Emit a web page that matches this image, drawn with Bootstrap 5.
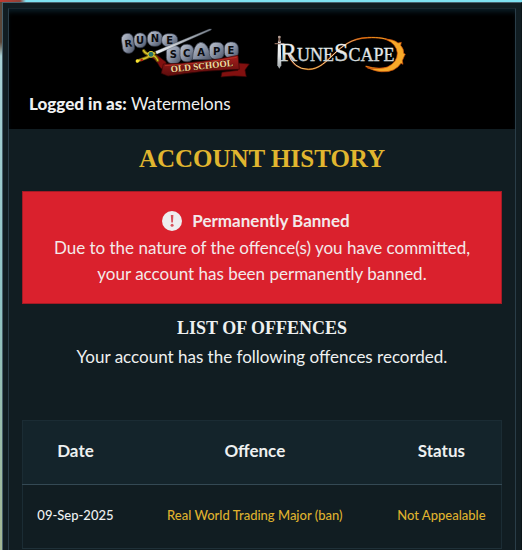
<!DOCTYPE html>
<html lang="en">
<head>
<meta charset="utf-8">
<meta name="viewport" content="width=device-width, initial-scale=1">
<title>Account History</title>
<link href="https://cdn.jsdelivr.net/npm/bootstrap@5.3.0/dist/css/bootstrap.min.css" rel="stylesheet">
<style>
body{font-family:Lato,"Noto Sans",sans-serif;font-size:17px;line-height:26px;color:#eef0f0;
background:linear-gradient(90deg,#c23a30 0,#8f4238 20px,#7fe3f3 26px) top/100% 2px no-repeat,linear-gradient(#5a4638 0,#5a4638 42px,#a8d2d6 56px,#8fc4c6 300px,#a3b794 550px)}
.page-wrap{padding:2px 0 0 2px}
.frame{background:#111d22;border:1px solid #49616d;border-right-color:#0b1519;border-bottom:0;padding:5px 5px 0}
.panel{border:1px solid #2a3d48;border-top-color:#18272e;border-bottom:0}
.brand-bar{background:#000;box-shadow:inset 0 5px 5px -2px #0a1c25;padding:11px 20px 12px}
.brand-bar strong{font-weight:900}
.logos{gap:5px;margin-bottom:6px}
.logos svg{display:block}
h1,h2{font-family:"Liberation Serif",serif;font-weight:700;text-transform:uppercase}
h1{font-size:25px;line-height:30px;color:#e1b62f;margin:15px 0 17px}
h2{font-size:18px;line-height:24px;margin:12px 0 4px}
.content-area{padding:0 13px}
.ban-notice{background:#da212d;border:1px solid #a31b25;border-radius:0;padding:14px 20px 16px;margin:0;color:#f3e9ea}
.notice-title{gap:10px;line-height:29px;padding-right:12px}
.offences{--bs-table-bg:transparent;margin:50px 0 0;color:#eef0f0;font-size:13px;border:1px solid #1b2c34;text-align:center;border-collapse:collapse}
.offences th{font-size:17px;background:#14242b;color:#eef0f0;height:64px;padding:0 0 3px;border-bottom:1px solid #344954}
.offences td{height:64px;padding:0 0 3px;color:#eef0f0;border-bottom:1px solid #1f3038;font-weight:500}
.offences td a{color:#dfb12e;text-decoration:none}
.c-date{width:22%}.c-status{width:25%}
</style>
</head>
<body class="min-vh-100">
<div class="page-wrap">
<div class="frame min-vh-100">
<main class="panel min-vh-100">
<header class="brand-bar">
<div class="logos d-flex justify-content-center align-items-center">
<svg width="150" height="65" viewBox="0 0 450 195" role="img" aria-label="Old School RuneScape">
<defs>
<linearGradient id="stone" x2="1" y2="1"><stop offset="0" stop-color="#c2c8d4"/><stop offset=".5" stop-color="#8a93a5"/><stop offset="1" stop-color="#485062"/></linearGradient>
<linearGradient id="ribbon" x2="0" y2="1"><stop offset="0" stop-color="#a81f1d"/><stop offset="1" stop-color="#5c0c0c"/></linearGradient>
<linearGradient id="blade" x2="1"><stop offset="0" stop-color="#eff2f5"/><stop offset="1" stop-color="#777f8a"/></linearGradient>
</defs>
<g fill="url(#stone)" stroke="#343b4a" stroke-width="2">
<rect x="36" y="40" width="36" height="60" rx="17" transform="rotate(-8 54 70)"/>
<rect x="72" y="39" width="37" height="44" rx="17"/>
<rect x="112" y="33" width="45" height="46" rx="20"/>
<rect x="155" y="41" width="48" height="39" rx="18"/>
<rect x="169" y="77" width="44" height="54" rx="18"/>
<rect x="210" y="73" width="41" height="52" rx="18"/>
<path d="M247 119q3-48 25-52 22 0 34 52z"/>
<rect x="298" y="67" width="44" height="51" rx="18"/>
<rect x="343" y="66" width="42" height="49" rx="18"/>
</g>
<path d="M136 94 298 27l7 0-3 4-162 72z" fill="url(#blade)" stroke="#414854"/>
<g font-family="DejaVu Sans" font-weight="700" fill="#0b0c10" text-anchor="middle" font-size="30">
<text x="55" y="81" transform="rotate(-8 55 70)">R</text><text x="90" y="73">U</text><text x="135" y="67">N</text><text x="179" y="72">E</text>
<text x="190" y="114">S</text><text x="230" y="110">C</text><text x="273" y="108">A</text><text x="320" y="105">P</text><text x="363" y="103">E</text>
</g>
<path d="M112 106q26 10 38 36l20 18-2-34-27-21zM384 129l34 3-13 18 4 20q-38-5-76 1l3-14 48-6z" fill="#82100f" stroke="#380606" stroke-width="2"/>
<path d="M160 132q112-2 224-26l4 42q-108 2-214 20l-20-8z" fill="url(#ribbon)" stroke="#3b0505" stroke-width="2"/>
<path d="M165 137q110-4 215-25" fill="none" stroke="#c53a2c" stroke-width="2"/>
<g fill="none" stroke-linecap="round"><path d="M82 123q27-7 51-23M101 92q5 10 19 11 18 4 23 18" stroke="#776309" stroke-width="10"/><path d="M82 123q27-7 51-23M101 92q5 10 19 11 18 4 23 18" stroke="#d8c52a" stroke-width="4"/></g>
<circle cx="123" cy="103" r="9" fill="#287468" stroke="#dbc52d" stroke-width="3"/>
<circle cx="82" cy="123" r="5" fill="#fae533"/><circle cx="95" cy="120" r="4" fill="#b51f18"/>
<text x="183" y="157" transform="rotate(-6 183 157)" font-family="Liberation Serif" font-weight="700" font-size="28" fill="#f4d9a0" stroke="#41200d" stroke-width="2" paint-order="stroke">OLD SCHOOL</text>
</svg>
<svg width="150" height="55" viewBox="0 0 450 165" role="img" aria-label="RuneScape">
<defs>
<linearGradient id="silver" x2="0" y2="1"><stop offset="0" stop-color="#fff"/><stop offset=".55" stop-color="#e6e9ea"/><stop offset="1" stop-color="#9ba1a5"/></linearGradient>
<linearGradient id="fire" x1="60" x2="415" y1="0" y2="0" gradientUnits="userSpaceOnUse"><stop offset="0" stop-color="#e7e7e7"/><stop offset=".2" stop-color="#f1bd4c"/><stop offset=".45" stop-color="#eee2bd"/><stop offset=".65" stop-color="#e47810"/><stop offset="1" stop-color="#ffc735"/></linearGradient>
</defs>
<path d="M68 84q18 49 62 49c65 0 82-92 178-95 65-4 97 18 97 50 0 38-47 52-103 36" fill="none" stroke="#8c3205" stroke-width="5"/>
<path d="M68 84q18 49 62 49c65 0 82-92 178-95 65-4 97 18 97 50 0 38-47 52-103 36" fill="none" stroke="url(#fire)" stroke-width="3"/>
<path d="M362 43q32 13 35 41 0 29-30 42-22 8-61 2 46 21 79 7 15-7 23-20l6 3-2-11 6-14 3-5-5-3q1-13-9-24l2-9-10 2q-14-12-37-11z" fill="#f7a929" stroke="#c84c08" stroke-width="2"/>
<path d="M39 47h8l2 74-6 10-6-10z" fill="url(#silver)"/><path d="M40 34h6v18h-6zM29 54h29v4H29z" fill="#89695b"/><circle cx="43" cy="36" r="4" fill="#b09c92"/>
<text x="44" y="108" fill="url(#silver)" stroke="#dfe2e3" stroke-width="1" font-family="Liberation Serif" font-size="54"><tspan font-size="78">R</tspan>UNE<tspan font-size="78">S</tspan>CAPE</text>
</svg>
</div>
<div><strong>Logged in as:</strong> Watermelons</div>
</header>
<div class="content-area text-center">
<h1>Account History</h1>
<section class="ban-notice alert" role="alert">
<div class="notice-title d-flex justify-content-center align-items-center fw-bold">
<svg width="20" height="20" viewBox="0 0 20 20" aria-hidden="true"><circle cx="10" cy="10" r="10" fill="#eeeeef"/><path d="M8.8 4h2.6l-.5 7.5H9.3z" fill="#d7525b"/><circle cx="10.1" cy="14.3" r="1.5" fill="#d7525b"/></svg>
<span>Permanently Banned</span>
</div>
<div>Due to the nature of the offence(s) you have committed,<br>your account has been permanently banned.</div>
</section>
<h2>List of Offences</h2>
<p class="m-0">Your account has the following offences recorded.</p>
<table class="offences table align-middle">
<thead class="align-middle"><tr><th class="c-date" scope="col">Date</th><th scope="col">Offence</th><th class="c-status" scope="col">Status</th></tr></thead>
<tbody><tr><td>09-Sep-2025</td><td><a href="#offence">Real World Trading Major (ban)</a></td><td><a href="#status">Not Appealable</a></td></tr></tbody>
</table>
</div>
</main>
</div>
</div>
<script src="https://cdn.jsdelivr.net/npm/bootstrap@5.3.0/dist/js/bootstrap.bundle.min.js"></script>
</body>
</html>
